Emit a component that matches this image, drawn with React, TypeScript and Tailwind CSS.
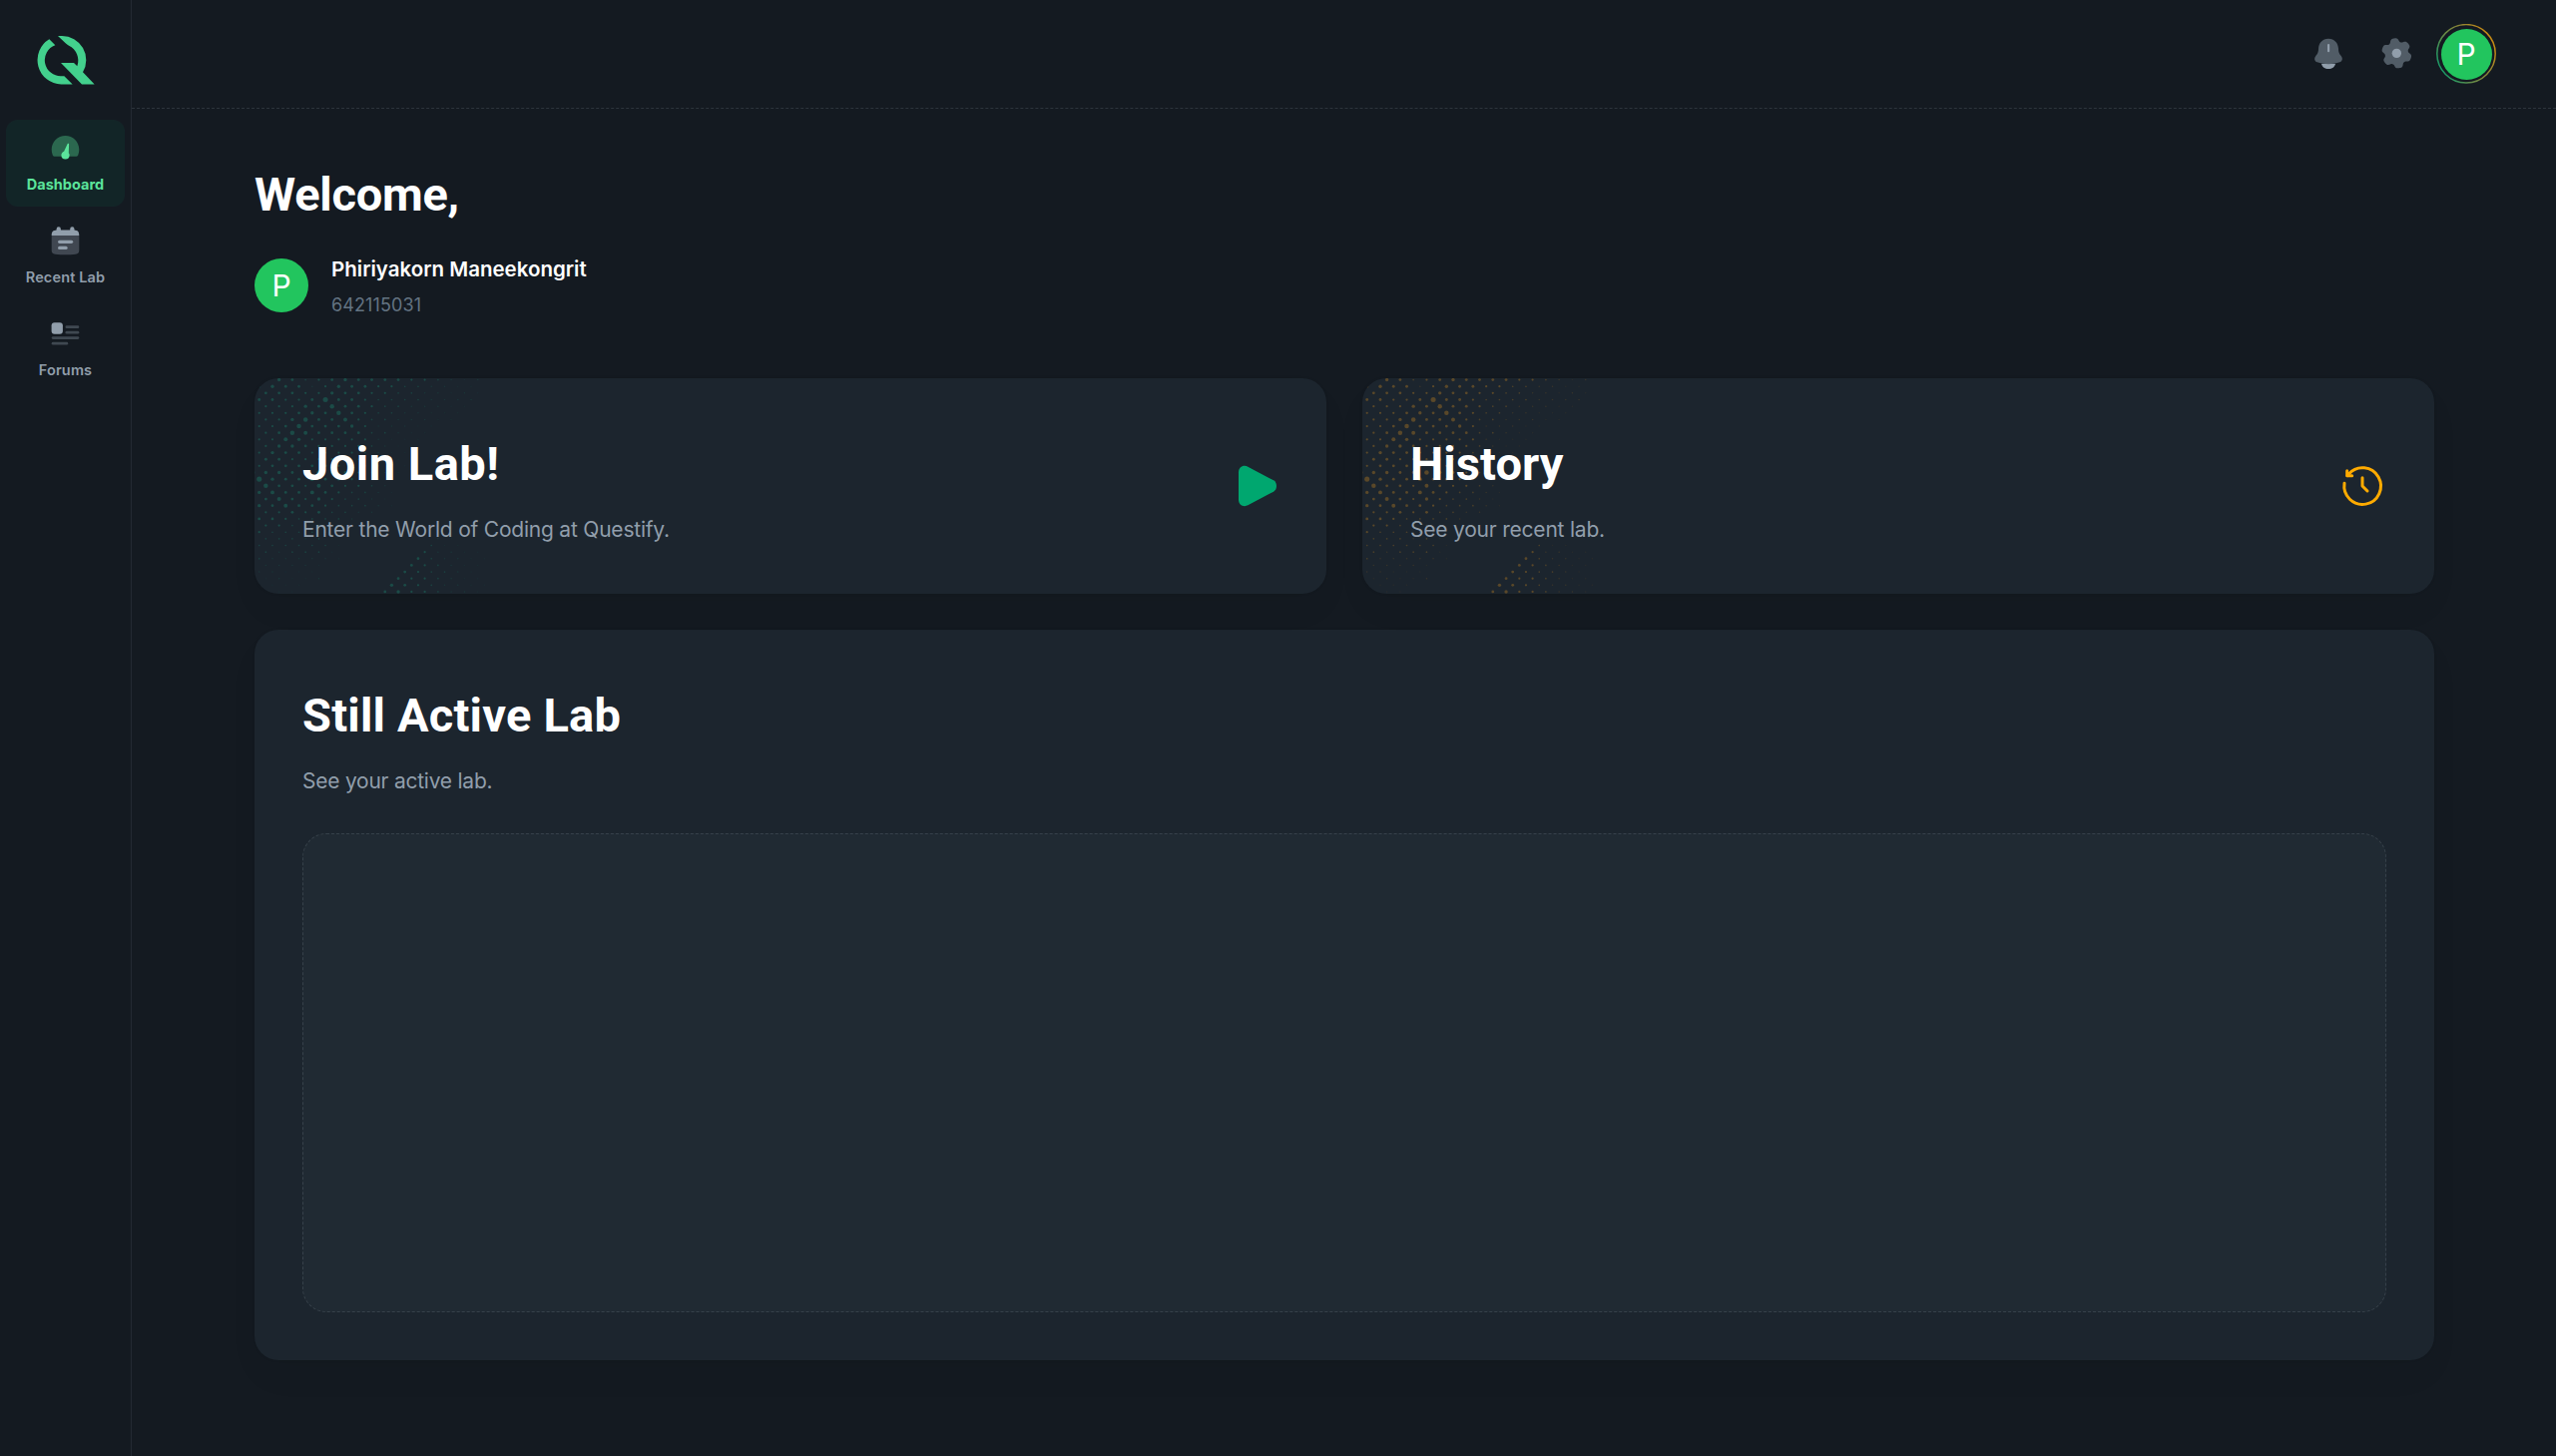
import React from "react";

/* Halftone: one string per dot row, one digit (dot size) per dot. */
const MAIN_ROWS = [
  "46534565555443212",
  "56552465544332211",
  "55544655443322121",
  "55445955433332222",
  "4446585543322211",
  "4445658543322111",
  "446855743322211",
  "44585556422211",
  "4587555533211",
  "4476444442111",
  "466544443211",
  "465544443211",
  "55444443221",
  "455555443211",
  "66558654321",
  "96557554321",
  "8554754432",
  "67557543321",
  "5754643321",
  "65755433321",
  "445453322",
  "55433332",
  "4433321",
  "433332",
  "333231",
  "3333331",
  "323331",
  "3222221",
  "22221",
  "22111",
  "12112",
  "1111",
  "111",
];

/* Second cluster along the bottom edge: [row, first column, sizes]. */
const LOWER_ROWS: [number, number, string][] = [
  [24, 27, "21"],
  [25, 26, "311"],
  [26, 25, "42211"],
  [27, 24, "532211"],
  [28, 23, "543211"],
  [29, 22, "543321"],
  [30, 21, "5443211"],
  [31, 20, "65432211"],
  [32, 19, "56443221"],
];

const STEP = 6.636;
const OPACITY = [0, 0.2, 0.45, 0.75];

function dotsFor(row: number, firstCol: number, sizes: string) {
  return sizes.split("").map((s, i) => {
    const n = Number(s);
    return {
      x: 4.7 + (firstCol + i * 2) * STEP,
      y: 1.6 + row * STEP,
      r: n > 2 ? n * 0.28 : 0.75,
      o: OPACITY[n] ?? 1,
    };
  });
}

const DOTS = [
  ...MAIN_ROWS.flatMap((sizes, row) => dotsFor(row, row % 2 === 0 ? 1 : 0, sizes)),
  ...dotsFor(14, -1, "8"),
  ...LOWER_ROWS.flatMap(([row, col, sizes]) => dotsFor(row, col, sizes)),
];

function Halftone({ color }: { color: string }) {
  return (
    <svg className="absolute left-0 top-0" width="300" height="216" viewBox="0 0 300 216" fill={color}>
      {DOTS.map((d, i) => (
        <circle key={i} cx={d.x} cy={d.y} r={d.r} opacity={d.o} />
      ))}
    </svg>
  );
}

function Logo() {
  return (
    <svg className="ml-9 mt-[35px] h-[51px] w-[60px] shrink-0" viewBox="108 105 180 153" fill="#43d08d">
      <path d="M148 118A73 73 0 0 0 184 253.500H218L193 228.500H185A48 48 0 0 1 166 135.500Z" />
      <path d="M174 108H186A72.500 72.500 0 0 1 249 217L284 253.500H246L183 189H222L232 199A50 50 0 0 0 207 137Q201 134 197 130Z" />
    </svg>
  );
}

function DashboardIcon() {
  return (
    <svg className="size-[33px]" viewBox="0 0 33 33" fill="#5be49b">
      <path
        opacity="0.35"
        d="M16.500 4C8.900 4 2.700 10.200 2.700 17.800c0 1.900.3 3.800 1 5.500.4 1 .8 1.400 1.700 1.400H27.600c.9 0 1.300-.4 1.700-1.400.7-1.700 1-3.600 1-5.500C30.300 10.200 24.100 4 16.500 4z"
      />
      <path d="M18.600 12.200c.3-.8 1.600-.6 1.500.3l-.3 8.700c.5.700.8 1.500.8 2.300a4.100 4.100 0 1 1-8.200 0c0-1.700 1.200-3.200 2.700-3.700z" />
    </svg>
  );
}

function CalendarIcon() {
  return (
    <svg className="size-[33px]" viewBox="0 0 33 33" fill="#919eab">
      <path opacity="0.35" d="M2.700 11H30.300V25.500c0 3-1 3.900-3.600 4.200-6.500.7-13.900.7-20.400 0-2.600-.3-3.600-1.200-3.600-4.200z" />
      <path d="M7.600 4.400a2.150 2.150 0 0 1 4.300 0v1.200h9.300V4.400a2.150 2.150 0 0 1 4.300 0v1.200c3.300.2 4.800 1.600 4.800 5.400H2.700c0-3.800 1.600-5.200 4.900-5.400z" />
      <rect x="9" y="15.700" width="15.200" height="3.300" rx="1.650" />
      <rect x="9" y="21.800" width="9.700" height="3.300" rx="1.650" />
    </svg>
  );
}

function ForumsIcon() {
  return (
    <svg className="size-[33px]" viewBox="0 0 33 33" fill="#919eab">
      <rect x="2.600" y="5.300" width="11.300" height="11.500" rx="3" />
      <g opacity="0.35">
        <rect x="16.500" y="8.300" width="13.800" height="2.700" rx="1.350" />
        <rect x="16.500" y="13.800" width="13.800" height="2.700" rx="1.350" />
        <rect x="2.700" y="19.200" width="27.600" height="2.700" rx="1.350" />
        <rect x="2.700" y="24.800" width="16.500" height="2.700" rx="1.350" />
      </g>
    </svg>
  );
}

function BellIcon() {
  return (
    <svg className="size-9" viewBox="0 0 108 108" fill="#919eab">
      <path d="M33 84H75C73 93 65 99 54 99S35 93 33 84z" />
      <path
        fill="#515c66"
        d="M54 8C36 8 25 21 24 38C24 50 20 54 16 60C10 68 12 76 20 79C30 83 42 85 54 85C66 85 78 83 88 79C96 76 98 68 92 60C88 54 84 50 84 38C83 21 72 8 54 8Z"
      />
      <rect x="51" y="24" width="6.500" height="25" rx="3" />
    </svg>
  );
}

const GEAR = Array.from({ length: 120 }, (_, i) => {
  const a = (i * 3 * Math.PI) / 180;
  const r = 39.5 + 6 * Math.tanh(1.6 * Math.cos(6 * (a - (80 * Math.PI) / 180)) + 0.6);
  return `${(55 + r * Math.cos(a)).toFixed(2)},${(52 + r * Math.sin(a)).toFixed(2)}`;
}).join(" ");

function GearIcon() {
  return (
    <svg className="size-9" viewBox="0 0 108 108">
      <polygon points={GEAR} fill="#515c66" />
      <circle cx="55" cy="52" r="14" fill="#919eab" />
    </svg>
  );
}

function PlayIcon() {
  return (
    <svg className="size-12 shrink-0" viewBox="0 0 144 144" fill="#00a76f">
      <path d="M24 31C24 16 38 7 52 14L129 55C141 62 141 82 129 89L52 130C38 137 24 128 24 113Z" />
    </svg>
  );
}

function HistoryIcon() {
  return (
    <svg
      className="size-12 shrink-0"
      viewBox="0 0 144 144"
      fill="none"
      stroke="#ffab00"
      strokeWidth="9"
      strokeLinecap="round"
      strokeLinejoin="round"
    >
      <path d="M18 64A55 55 0 1 0 31 36L27 41" />
      <path d="M26 26V41H41" />
      <path d="M72 47V72L87 87" />
    </svg>
  );
}

function NavItem({ label, active, children }: { label: string; active?: boolean; children: React.ReactNode }) {
  return (
    <a
      className={
        active
          ? "flex h-[87px] w-[119px] flex-col items-center rounded-xl bg-[#00a76f]/[0.08] pt-3 font-bold text-[#5be49b]"
          : "flex h-[87px] w-[119px] flex-col items-center rounded-xl pt-3 font-semibold tracking-[0.15px] text-[#919eab]"
      }
    >
      {children}
      <span className="mt-[7px] text-[14.5px] leading-[26px]">{label}</span>
    </a>
  );
}

function FeatureCard({
  title,
  titleClass,
  text,
  color,
  icon,
}: {
  title: string;
  titleClass: string;
  text: string;
  color: string;
  icon: React.ReactNode;
}) {
  return (
    <section className="relative flex h-[216px] items-center justify-between overflow-hidden rounded-3xl bg-[#1c252e] p-12 shadow-[0_0_3px_rgba(0,0,0,0.1),0_18px_36px_-6px_rgba(0,0,0,0.05)]">
      <Halftone color={color} />
      <div className="relative">
        <h2 className={titleClass}>{title}</h2>
        <p className="mt-[11px] text-[21px] leading-[33px] tracking-[-0.21px] text-[#919eab]">{text}</p>
      </div>
      {icon}
    </section>
  );
}

export default function App() {
  return (
    <div className="flex h-[1459px] w-full overflow-hidden bg-[#141a21] font-['Inter',sans-serif] text-white">
      <aside className="flex w-[132px] shrink-0 flex-col border-r border-[#919eab]/[0.12]">
        <Logo />
        <nav className="ml-1.5 mt-[34px] flex flex-col gap-1.5">
          <NavItem label="Dashboard" active>
            <DashboardIcon />
          </NavItem>
          <NavItem label="Recent Lab">
            <CalendarIcon />
          </NavItem>
          <NavItem label="Forums">
            <ForumsIcon />
          </NavItem>
        </nav>
      </aside>

      <div className="flex min-w-0 grow flex-col">
        <header className="flex h-[109px] shrink-0 items-center justify-end border-b border-dashed border-[#919eab]/20 pr-[60px]">
          <BellIcon />
          <div className="w-8" />
          <GearIcon />
          <div className="relative ml-[22px] flex size-[60px] items-center justify-center">
            <svg className="absolute inset-0" width="60" height="60" viewBox="0 0 60 60" fill="none">
              <defs>
                <linearGradient id="ring" x1="0.050" y1="0.850" x2="0.950" y2="0.300">
                  <stop offset="0" stopColor="#0d9c6b" />
                  <stop offset="0.350" stopColor="#5f8a4a" />
                  <stop offset="0.700" stopColor="#8d8435" />
                  <stop offset="1" stopColor="#c58a14" />
                </linearGradient>
              </defs>
              <circle cx="30" cy="29.800" r="29.200" stroke="url(#ring)" strokeWidth="1.500" />
            </svg>
            <div className="flex size-[51px] items-center justify-center rounded-full bg-[#22c55e] text-[30px] leading-none">
              P
            </div>
          </div>
        </header>

        <main className="ml-[123px] w-[2184px] pt-[59px]">
          <h1 className="font-['Roboto',sans-serif] text-[47px] font-bold leading-[54px] tracking-[-0.25px]">
            Welcome,
          </h1>

          <div className="mt-8 flex h-16 items-center gap-[23px]">
            <div className="flex size-[54px] items-center justify-center rounded-full bg-[#22c55e] text-[30px] leading-none">
              P
            </div>
            <div>
              <div className="text-[20.5px] font-semibold leading-[30px]">Phiriyakorn Maneekongrit</div>
              <div className="mt-[9px] text-[18px] leading-6 tracking-[0.1px] text-[#637381]">642115031</div>
            </div>
          </div>

          <div className="mt-[61px] grid grid-cols-2 gap-9">
            <FeatureCard
              title="Join Lab!"
              titleClass="font-['Roboto',sans-serif] text-[47px] font-bold leading-[76px] tracking-[0.5px]"
              text="Enter the World of Coding at Questify."
              color="#1b4b47"
              icon={<PlayIcon />}
            />
            <FeatureCard
              title="History"
              titleClass="font-['Roboto',sans-serif] text-[47px] font-bold leading-[76px] tracking-[0.1px]"
              text="See your recent lab."
              color="#5a4829"
              icon={<HistoryIcon />}
            />
          </div>

          <section className="mt-9 rounded-3xl bg-[#1c252e] p-12 shadow-[0_0_3px_rgba(0,0,0,0.1),0_18px_36px_-6px_rgba(0,0,0,0.05)]">
            <h2 className="font-['Roboto',sans-serif] text-[47px] font-bold leading-[76px] tracking-[0.2px]">
              Still Active Lab
            </h2>
            <p className="mt-[11px] text-[21px] leading-[33px] tracking-[-0.24px] text-[#919eab]">See your active lab.</p>
            <div className="mt-9 h-[480px] rounded-3xl border border-dashed border-[#919eab]/20 bg-[#919eab]/[0.045]" />
          </section>
        </main>
      </div>
    </div>
  );
}
